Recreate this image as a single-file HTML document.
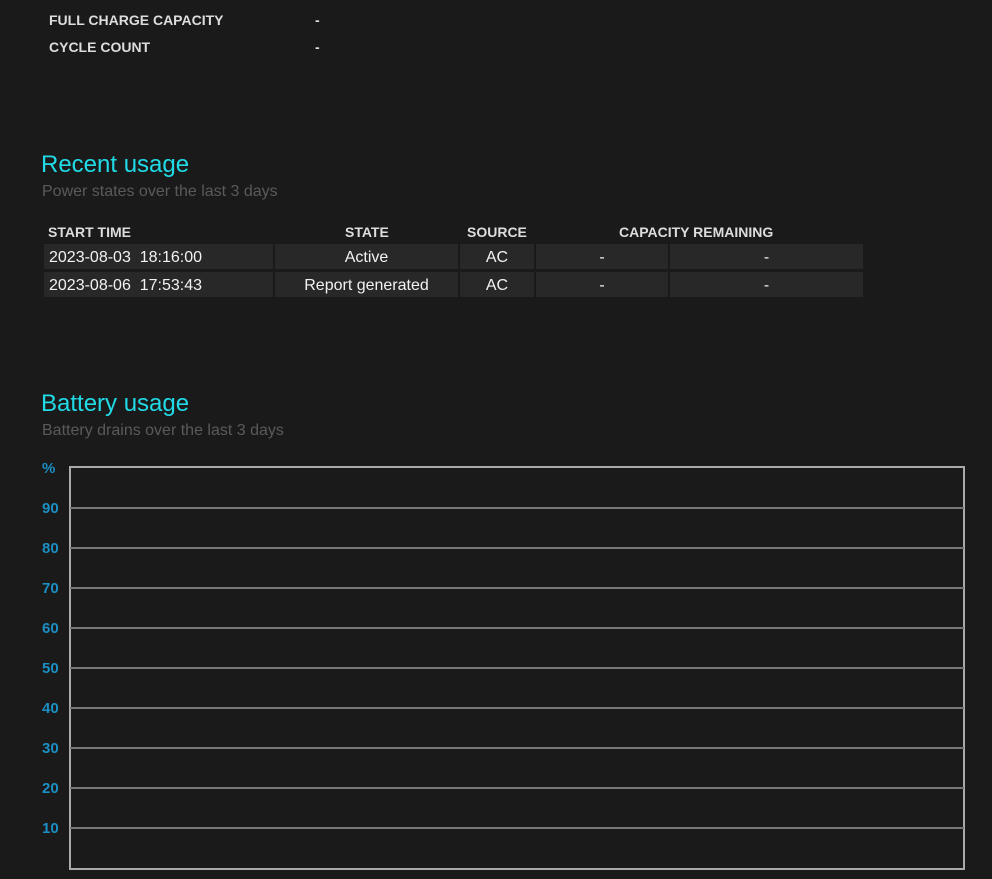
<!DOCTYPE html>
<html><head><style>
body{margin:0;background:#1a1a1a;width:992px;height:879px;overflow:hidden;position:relative;font-family:"Liberation Sans",sans-serif;color:#fff}
.a{position:absolute;white-space:nowrap}
.lbl{font-size:14px;font-weight:bold;color:#ddd}
h2{position:absolute;margin:0;font-size:24px;font-weight:normal;color:#20dbe6;left:41px}
.sub{position:absolute;left:42px;font-size:16px;color:#5a5a5a}
.c{position:absolute;background:#282828;height:25px;line-height:28px;font-size:16px;color:#f2f2f2;text-align:center}
.th{position:absolute;font-size:14px;font-weight:bold;color:#ddd;top:224px}
.g{position:absolute;left:70px;width:894px;height:2px;background:#777}
.y{position:absolute;left:42px;font-size:15px;font-weight:bold;color:#1b8fc4}
</style></head><body>
<div class="a lbl" style="left:49px;top:12px">FULL CHARGE CAPACITY</div>
<div class="a lbl" style="left:315px;top:12px">-</div>
<div class="a lbl" style="left:49px;top:39px">CYCLE COUNT</div>
<div class="a lbl" style="left:315px;top:39px">-</div>

<h2 style="top:151px">Recent usage</h2>
<div class="sub" style="top:183px">Power states over the last 3 days</div>
<div class="th" style="left:48px">START TIME</div>
<div class="th" style="left:345px">STATE</div>
<div class="th" style="left:467px">SOURCE</div>
<div class="th" style="left:619px">CAPACITY REMAINING</div>

<div class="c" style="left:44px;top:244px;width:229px;text-align:left;padding-left:5px;box-sizing:border-box">2023-08-03&nbsp;&nbsp;18:16:00</div>
<div class="c" style="left:275px;top:244px;width:183px">Active</div>
<div class="c" style="left:460px;top:244px;width:74px">AC</div>
<div class="c" style="left:536px;top:244px;width:132px">-</div>
<div class="c" style="left:670px;top:244px;width:193px">-</div>
<div class="c" style="left:44px;top:272px;width:229px;text-align:left;padding-left:5px;box-sizing:border-box">2023-08-06&nbsp;&nbsp;17:53:43</div>
<div class="c" style="left:275px;top:272px;width:183px">Report generated</div>
<div class="c" style="left:460px;top:272px;width:74px">AC</div>
<div class="c" style="left:536px;top:272px;width:132px">-</div>
<div class="c" style="left:670px;top:272px;width:193px">-</div>

<h2 style="top:390px">Battery usage</h2>
<div class="sub" style="top:422px">Battery drains over the last 3 days</div>

<div style="position:absolute;left:69px;top:466px;width:892px;height:400px;border:2px solid #aaa"></div>
<div class="g" style="top:507px"></div>
<div class="g" style="top:547px"></div>
<div class="g" style="top:587px"></div>
<div class="g" style="top:627px"></div>
<div class="g" style="top:667px"></div>
<div class="g" style="top:707px"></div>
<div class="g" style="top:747px"></div>
<div class="g" style="top:787px"></div>
<div class="g" style="top:827px"></div>
<div class="y" style="top:460px">%</div>
<div class="y" style="top:500px">90</div>
<div class="y" style="top:540px">80</div>
<div class="y" style="top:580px">70</div>
<div class="y" style="top:620px">60</div>
<div class="y" style="top:660px">50</div>
<div class="y" style="top:700px">40</div>
<div class="y" style="top:740px">30</div>
<div class="y" style="top:780px">20</div>
<div class="y" style="top:820px">10</div>
</body></html>
